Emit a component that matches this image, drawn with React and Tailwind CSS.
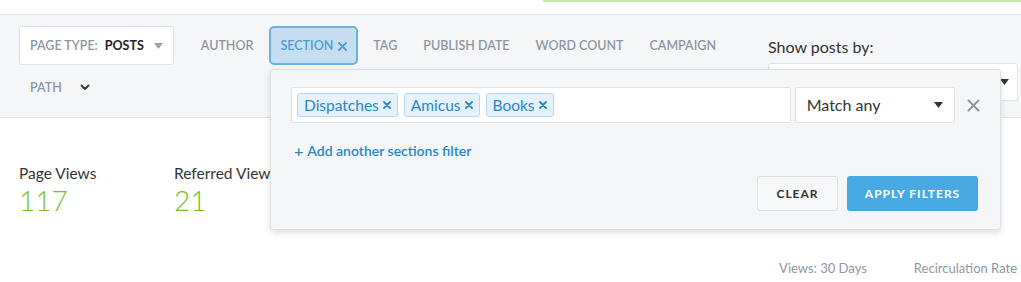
import React from "react";

function Caret({ className = "" }) {
  return (
    <svg width="9" height="6" viewBox="0 0 9 6" className={className}>
      <path d="M0 0 L9 0 L4.5 6 Z" fill="currentColor" />
    </svg>
  );
}

function Chip({ label }) {
  return (
    <span className="flex items-center h-[24px] px-[6px] pt-[1px] rounded-[3px] border border-[#b6d9f1] bg-[#e6f2fb] text-[#2a86c7] text-[15.5px] leading-none">
      <span>{label}</span>
      <svg width="8" height="8" viewBox="0 0 8 8" className="ml-[4px] mb-[2px]">
        <path d="M1 1 L7 7 M7 1 L1 7" stroke="currentColor" strokeWidth="1.8" strokeLinecap="round" />
      </svg>
    </span>
  );
}

const label = "flex items-center h-[39px] px-[11px] pt-[2px] text-[12.5px] font-semibold whitespace-nowrap text-[#8d96a0]";

export default function App() {
  const items = ["TAG", "PUBLISH DATE", "WORD COUNT", "CAMPAIGN"];
  return (
    <div className="relative w-[1021px] h-[282px] overflow-hidden bg-white font-['Lato','Noto_Sans',sans-serif] text-[#333]">
      {/* top strip */}
      <div className="h-[15px] border-b border-[#e2e5e9] flex">
        <div className="ml-[543px] flex-1 h-[2px] bg-[#c9e8a6]" />
      </div>

      {/* filter bar */}
      <div className="h-[103px] bg-[#f5f6f8] border-b border-[#e2e5e9] flex pl-[19px] pt-[11px]">
        <div className="w-[735px] flex flex-col gap-y-[3px]">
          <div className="flex">
            <div className="flex items-center h-[39px] bg-white border border-[#dfe2e6] rounded-[3px] pl-[10px] pr-[10px] pt-[2px] text-[12.5px] font-semibold whitespace-nowrap">
              <span className="text-[#8d96a0]">PAGE TYPE:</span>
              <span className="ml-[7px] font-bold text-[#222]">POSTS</span>
              <Caret className="ml-[10px] mb-[2px] text-[#9ca3ab]" />
            </div>
            <div className={label + " ml-[16px]"}>AUTHOR</div>
            <div className="ml-[5px] flex items-center h-[39px] px-[9px] pt-[2px] rounded-[5px] border-2 border-[#6fb0de] bg-[#c6dff0] text-[12.5px] font-semibold whitespace-nowrap text-[#4f9bd3]">
              SECTION
              <svg width="9" height="9" viewBox="0 0 9 9" className="ml-[5px] mb-[1px]">
                <path d="M1 1 L8 8 M8 1 L1 8" stroke="currentColor" strokeWidth="1.8" strokeLinecap="round" />
              </svg>
            </div>
            {items.map((t) => (
              <div key={t} className={label + " ml-[4px]"}>
                {t}
              </div>
            ))}
          </div>
          <div className="flex">
            <div className={label}>
              PATH
              <svg width="10" height="7" viewBox="0 0 10 7" className="ml-[18px] mb-[2px] text-[#333]">
                <path d="M1.5 1.5 L5 5 L8.5 1.5" stroke="currentColor" strokeWidth="1.8" fill="none" strokeLinecap="round" strokeLinejoin="round" />
              </svg>
            </div>
          </div>
        </div>
        <div className="ml-[14px] flex flex-col">
          <div className="h-[26px] mt-[11px] text-[16px] text-[#333] leading-[20px] whitespace-nowrap">Show posts by:</div>
          <div className="w-[250px] h-[38px] bg-white border border-[#dfe2e6] rounded-[3px] flex items-center justify-end pr-[8px]">
            <Caret className="text-[#333]" />
          </div>
        </div>
      </div>

      {/* stats */}
      <div className="flex px-[19px] pt-[45px]">
        <div className="w-[155px]">
          <div className="text-[15.5px] leading-[20px] text-[#333] whitespace-nowrap">Page Views</div>
          <div className="text-[28px] leading-[34px] font-light text-[#78c02a]">117</div>
        </div>
        <div className="w-[155px]">
          <div className="text-[15.5px] leading-[20px] text-[#333] whitespace-nowrap">Referred Views</div>
          <div className="text-[28px] leading-[34px] font-light text-[#78c02a]">21</div>
        </div>
      </div>
      <div className="flex justify-end gap-[47px] pr-[4px] mt-[42px] text-[13px] leading-[18px] text-[#8d96a0]">
        <span>Views: 30 Days</span>
        <span>Recirculation Rate</span>
      </div>

      {/* popup */}
      <div className="absolute left-[270px] top-[69px] w-[731px] h-[161px] bg-[#f5f6f8] border border-[#dcdfe3] rounded-[3px] shadow-[0_3px_6px_rgba(0,0,0,0.13)] px-[20px] pt-[17px]">
        <div className="flex items-center">
          <div className="w-[502px] h-[36px] bg-white border border-[#dfe2e6] rounded-[2px] flex items-center gap-[6px] pl-[5px]">
            <Chip label="Dispatches" />
            <Chip label="Amicus" />
            <Chip label="Books" />
          </div>
          <div className="ml-[4px] w-[161px] h-[36px] bg-white border border-[#dfe2e6] rounded-[2px] flex items-center justify-between pl-[11px] pr-[11px] text-[16px] text-[#333]">
            <span>Match any</span>
            <Caret className="text-[#333]" />
          </div>
          <svg width="13" height="13" viewBox="0 0 13 13" className="ml-[12px] text-[#8d96a0]">
            <path d="M1.5 1.5 L11.5 11.5 M11.5 1.5 L1.5 11.5" stroke="currentColor" strokeWidth="2" strokeLinecap="round" />
          </svg>
        </div>
        <div className="mt-[19px] pl-[3px] flex items-center text-[14px] font-semibold text-[#2a86c7] leading-[18px]">
          <span className="text-[16px] mr-[4px] leading-none">+</span>
          Add another sections filter
        </div>
        <div className="mt-[16px] flex justify-end gap-[9px] pr-[2px]">
          <button className="w-[81px] h-[35px] rounded-[3px] border border-[#dcdfe3] bg-[#f7f8f9] text-[12px] font-bold tracking-[1px] text-[#333]">
            CLEAR
          </button>
          <button className="w-[131px] h-[35px] rounded-[3px] bg-[#47a8e2] text-[12px] font-bold tracking-[1px] text-white">
            APPLY FILTERS
          </button>
        </div>
      </div>
    </div>
  );
}
